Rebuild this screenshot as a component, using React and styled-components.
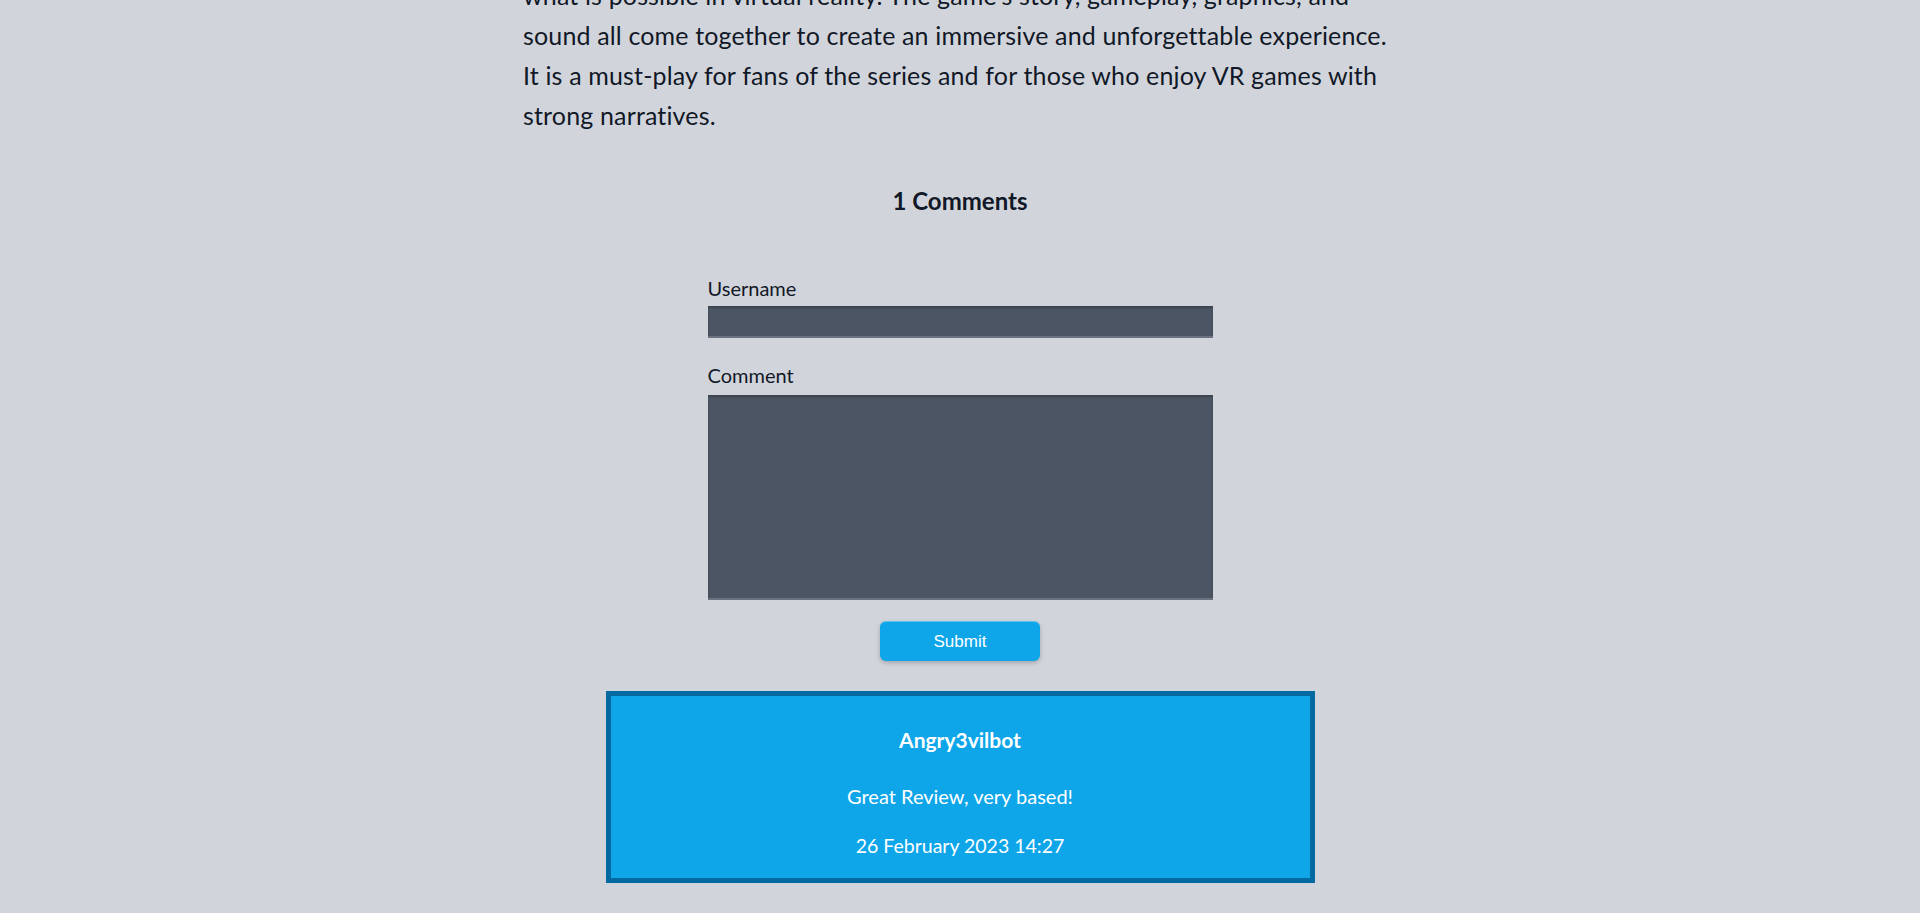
import React from 'react'
import styled, { createGlobalStyle } from 'styled-components'

const GlobalStyle = createGlobalStyle`
  html, body {
    margin: 0;
    padding: 0;
    background: #d1d5db;
    overflow: hidden;
  }
  body {
    font-family: Lato, 'Noto Sans', sans-serif;
    color: #111827;
  }
  * { box-sizing: border-box; }
`

const Page = styled.main`
  display: flex;
  flex-direction: column;
  align-items: center;
  margin-top: -25px;
  padding-bottom: 40px;
`

const Article = styled.article`
  width: 874px;
`

const Paragraph = styled.p`
  margin: 0;
  font-size: 25px;
  letter-spacing: 0.15px;
  line-height: 40px;
  color: #111827;
  white-space: nowrap;
`

const CommentsTitle = styled.h2`
  margin: 50px 0 0;
  font-size: 24px;
  line-height: 32px;
  font-weight: 700;
  text-align: center;
`

const Form = styled.form`
  width: 505px;
  margin-top: 59px;
  display: flex;
  flex-direction: column;
`

const Label = styled.label`
  display: block;
  font-size: 20px;
  line-height: 24px;
  margin-top: ${({ $first }) => ($first ? '0' : '25px')};
  margin-bottom: ${({ $first }) => ($first ? '6px' : '8px')};
`

const fieldStyles = `
  display: block;
  width: 100%;
  background: #4b5563;
  border: none;
  border-bottom: 2px solid #6b7280;
  box-shadow: inset 0 2px 2px rgba(0, 0, 0, 0.22);
  color: #fff;
  font-family: Lato, sans-serif;
  font-size: 18px;
  outline: none;
  padding: 4px 8px;
`

const Input = styled.input`
  ${fieldStyles}
  height: 32px;
`

const TextArea = styled.textarea`
  ${fieldStyles}
  height: 205px;
  resize: none;
`

const SubmitButton = styled.button`
  align-self: center;
  width: 160px;
  height: 40px;
  margin-top: 21px;
  background: #0ea5e9;
  border: none;
  border-top: 1px solid #5cc4f2;
  border-radius: 6px;
  box-shadow: 0 2px 4px rgba(0, 0, 0, 0.22);
  color: #fff;
  font-family: 'Liberation Sans', Arial, sans-serif;
  font-size: 17px;
  cursor: pointer;
`

const CommentCard = styled.div`
  width: 709px;
  margin-top: 30px;
  background: #0ea5e9;
  border: 5px solid #0369a1;
  padding: 30px 20px 18px;
  color: #fff;
  text-align: center;
`

const Author = styled.h3`
  margin: 0 0 28px;
  font-size: 21px;
  line-height: 28px;
  font-weight: 700;
`

const CommentText = styled.p`
  margin: 0 0 22px;
  font-size: 20px;
  line-height: 28px;
`

const CommentDate = styled.p`
  margin: 0;
  font-size: 19.5px;
  line-height: 28px;
`

const comments = [
  { author: 'Angry3vilbot', text: 'Great Review, very based!', date: '26 February 2023 14:27' },
]

const App = () => {
  return (
    <>
      <GlobalStyle />
      <Page>
        <Article>
          <Paragraph>
            what is possible in virtual reality. The game's story, gameplay, graphics, and<br />
            sound all come together to create an immersive and unforgettable experience.<br />
            It is a must-play for fans of the series and for those who enjoy VR games with<br />
            strong narratives.
          </Paragraph>
        </Article>

        <CommentsTitle>{comments.length} Comments</CommentsTitle>

        <Form onSubmit={(e) => e.preventDefault()}>
          <Label $first htmlFor="username">Username</Label>
          <Input id="username" type="text" />
          <Label htmlFor="comment">Comment</Label>
          <TextArea id="comment" />
          <SubmitButton type="submit">Submit</SubmitButton>
        </Form>

        {comments.map((c) => (
          <CommentCard key={c.author + c.date}>
            <Author>{c.author}</Author>
            <CommentText>{c.text}</CommentText>
            <CommentDate>{c.date}</CommentDate>
          </CommentCard>
        ))}
      </Page>
    </>
  )
}

export default App
